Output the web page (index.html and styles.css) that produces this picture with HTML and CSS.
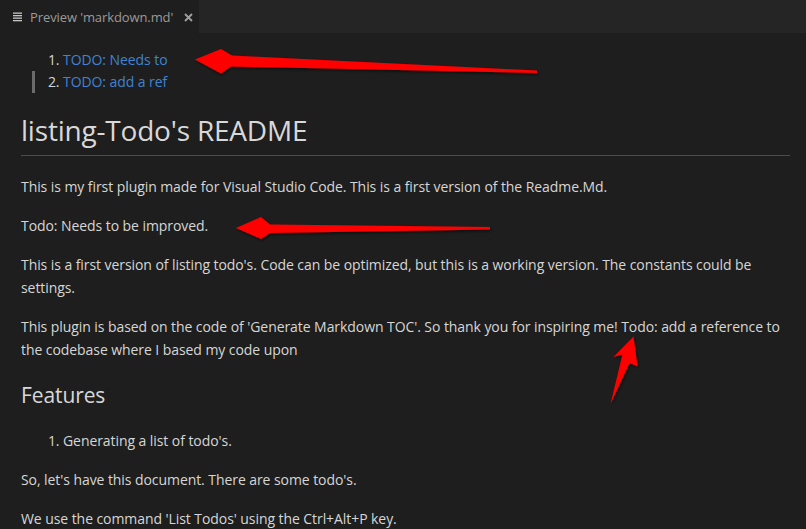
FILE: index.html
```html
<!DOCTYPE html>
<html>
<head>
<meta charset="utf-8">
<link rel="stylesheet" href="styles.css">
</head>
<body>
<div class="tabbar">
  <div class="tab">
    <svg class="tab-icon" width="10" height="10" viewBox="0 0 10 10"><rect x="0" y="0.5" width="9" height="1.3" fill="#c5c5c5"/><rect x="0" y="3" width="9" height="1.3" fill="#c5c5c5"/><rect x="0" y="5.5" width="9" height="1.3" fill="#c5c5c5"/><rect x="0" y="8" width="9" height="1.3" fill="#c5c5c5"/></svg>
    <span class="tab-label">Preview 'markdown.md'</span>
    <svg class="tab-close" width="9" height="9" viewBox="0 0 9 9"><path d="M1 1 L8 8 M8 1 L1 8" stroke="#a0a0a0" stroke-width="1.8"/></svg>
  </div>
  <div class="tab-fill"></div>
</div>
<main class="preview">
  <ol class="toc">
    <li><a>TODO: Needs to</a></li>
    <li class="active-line"><a>TODO: add a ref</a></li>
  </ol>
  <h1>listing-Todo's README</h1>
  <p>This is my first plugin made for Visual Studio Code. This is a first version of the Readme.Md.</p>
  <p>Todo: Needs to be improved.</p>
  <p>This is a first version of listing todo's. Code can be optimized, but this is a working version. The constants could be settings.</p>
  <p>This plugin is based on the code of 'Generate Markdown TOC'. So thank you for inspiring me! Todo: add a reference to the codebase where I based my code upon</p>
  <h2>Features</h2>
  <ol class="features">
    <li>Generating a list of todo's.</li>
  </ol>
  <p>So, let's have this document. There are some todo's.</p>
  <p>We use the command 'List Todos' using the Ctrl+Alt+P key.</p>
</main>
<svg class="annotations" width="806" height="529" viewBox="0 0 806 529">
  <defs>
    <filter id="sh" x="-20%" y="-50%" width="140%" height="200%">
      <feDropShadow dx="1" dy="1.5" stdDeviation="1.5" flood-color="#000" flood-opacity="0.6"/>
    </filter>
  </defs>
  <polygon filter="url(#sh)" fill="#ff0000" points="195,59.5 221,49 232,55.5 537,70.5 537,73 231,66.5 221,73.5"/>
  <polygon filter="url(#sh)" fill="#ff0000" points="236,228 261,217 270,224.5 490,227 490,229.5 270,233 261,239"/>
  <polygon filter="url(#sh)" fill="#ff0000" points="633.5,336.5 613.5,357 622.5,354.5 610.5,404 629.5,363 637.5,366.5"/>
</svg>
</body>
</html>
```
FILE: styles.css
```css
html, body {
  margin: 0;
  padding: 0;
  background: #1e1e1e;
}
body {
  width: 806px;
  height: 529px;
  overflow: hidden;
  position: relative;
  font-family: "Open Sans", "Noto Sans", sans-serif;
}
.tabbar {
  display: flex;
  height: 33px;
  background: #252526;
}
.tab {
  width: 199px;
  background: #1e1e1e;
  display: flex;
  align-items: center;
  padding-left: 13px;
  box-sizing: border-box;
}
.tab-icon {
  margin-right: 7px;
  margin-top: 1px;
}
.tab-label {
  font-size: 13px;
  color: #9a9a9a;
  letter-spacing: -0.1px;
  white-space: nowrap;
}
.tab-close {
  margin-left: 11px;
  margin-top: 1px;
}
.tab-fill {
  flex: 1;
}
.preview {
  padding: 16px 16px 0 21px;
  color: #d6d6d6;
  font-size: 14px;
  letter-spacing: -0.07px;
  line-height: 23px;
}
.toc {
  margin: 0;
  padding-left: 42px;
  line-height: 22px;
}
.toc li {
  position: relative;
}
.toc a {
  color: #3f83d4;
}
.active-line::before {
  content: "";
  position: absolute;
  left: -31px;
  top: 0;
  width: 3px;
  height: 22px;
  background: #6b6b6b;
}
h1 {
  margin: 20px 0 19px;
  font-size: 28px;
  font-weight: normal;
  line-height: 35px;
  padding-bottom: 7px;
  border-bottom: 1px solid #4b4b4b;
  color: #d8d8d8;
  letter-spacing: -0.2px;
}
p {
  margin: 0 0 16px;
}
h2 {
  margin: 22px 0 21px;
  font-size: 21px;
  font-weight: normal;
  line-height: 25px;
  color: #d8d8d8;
  letter-spacing: -0.1px;
}
.features {
  margin: 0 0 16px;
  padding-left: 42px;
}
.annotations {
  position: absolute;
  left: 0;
  top: 0;
  pointer-events: none;
}
```
